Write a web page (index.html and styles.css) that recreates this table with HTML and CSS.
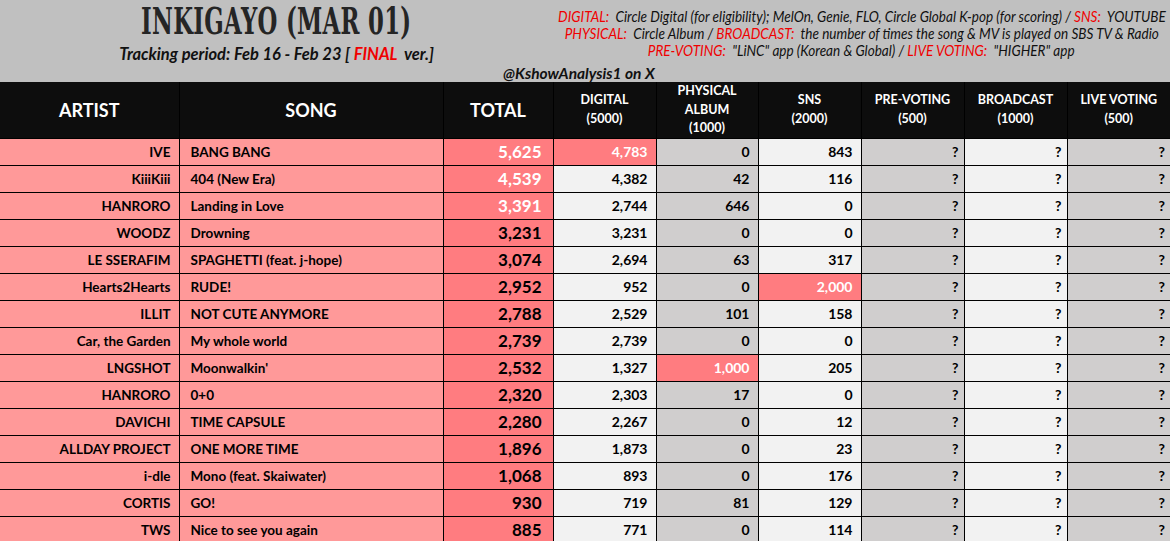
FILE: index.html
```html
<!DOCTYPE html>
<html lang="en">
<head>
<meta charset="utf-8">
<title>INKIGAYO (MAR 01)</title>
<link rel="stylesheet" href="styles.css">
</head>
<body>
<div class="top">
  <div class="title-block">
    <div class="title"><span class="title-text">INKIGAYO (MAR 01)</span></div>
    <div class="period">Tracking period: Feb 16 - Feb 23 [ <span class="red">FINAL</span> &nbsp;ver.]</div>
  </div>
  <div class="info">
    <div class="line"><span class="sq"><span class="red">DIGITAL:</span>&nbsp; Circle Digital (for eligibility); MelOn, Genie, FLO, Circle Global K-pop (for scoring) / <span class="red">SNS:</span>&nbsp; YOUTUBE</span></div>
    <div class="line"><span class="sq"><span class="red">PHYSICAL:</span>&nbsp; Circle Album / <span class="red">BROADCAST:</span>&nbsp; the number of times the song &amp; MV is played on SBS TV &amp; Radio</span></div>
    <div class="line"><span class="sq"><span class="red">PRE-VOTING:</span>&nbsp; "LiNC" app (Korean &amp; Global) / <span class="red">LIVE VOTING:</span>&nbsp; "HIGHER" app</span></div>
  </div>
  <div class="handle">@KshowAnalysis1 on X</div>
</div>
<table class="chart">
  <colgroup>
    <col class="c-artist"><col class="c-song"><col class="c-total"><col class="c-num"><col class="c-num2"><col class="c-num"><col class="c-num"><col class="c-num"><col class="c-num">
  </colgroup>
  <thead>
    <tr>
      <th class="big">ARTIST</th>
      <th class="big">SONG</th>
      <th class="big">TOTAL</th>
      <th>DIGITAL<br>(5000)</th>
      <th>PHYSICAL<br>ALBUM<br>(1000)</th>
      <th>SNS<br>(2000)</th>
      <th>PRE-VOTING<br>(500)</th>
      <th>BROADCAST<br>(1000)</th>
      <th>LIVE VOTING<br>(500)</th>
    </tr>
  </thead>
  <tbody>
    <tr><td class="artist">IVE</td><td class="song">BANG BANG</td><td class="total top3">5,625</td><td class="num light hot">4,783</td><td class="num gray">0</td><td class="num light">843</td><td class="q gray">?</td><td class="q light">?</td><td class="q gray">?</td></tr>
    <tr><td class="artist">KiiiKiii</td><td class="song">404 (New Era)</td><td class="total top3">4,539</td><td class="num light">4,382</td><td class="num gray">42</td><td class="num light">116</td><td class="q gray">?</td><td class="q light">?</td><td class="q gray">?</td></tr>
    <tr><td class="artist">HANRORO</td><td class="song">Landing in Love</td><td class="total top3">3,391</td><td class="num light">2,744</td><td class="num gray">646</td><td class="num light">0</td><td class="q gray">?</td><td class="q light">?</td><td class="q gray">?</td></tr>
    <tr><td class="artist">WOODZ</td><td class="song">Drowning</td><td class="total">3,231</td><td class="num light">3,231</td><td class="num gray">0</td><td class="num light">0</td><td class="q gray">?</td><td class="q light">?</td><td class="q gray">?</td></tr>
    <tr><td class="artist">LE SSERAFIM</td><td class="song">SPAGHETTI (feat. j-hope)</td><td class="total">3,074</td><td class="num light">2,694</td><td class="num gray">63</td><td class="num light">317</td><td class="q gray">?</td><td class="q light">?</td><td class="q gray">?</td></tr>
    <tr><td class="artist">Hearts2Hearts</td><td class="song">RUDE!</td><td class="total">2,952</td><td class="num light">952</td><td class="num gray">0</td><td class="num light hot">2,000</td><td class="q gray">?</td><td class="q light">?</td><td class="q gray">?</td></tr>
    <tr><td class="artist">ILLIT</td><td class="song">NOT CUTE ANYMORE</td><td class="total">2,788</td><td class="num light">2,529</td><td class="num gray">101</td><td class="num light">158</td><td class="q gray">?</td><td class="q light">?</td><td class="q gray">?</td></tr>
    <tr><td class="artist">Car, the Garden</td><td class="song">My whole world</td><td class="total">2,739</td><td class="num light">2,739</td><td class="num gray">0</td><td class="num light">0</td><td class="q gray">?</td><td class="q light">?</td><td class="q gray">?</td></tr>
    <tr><td class="artist">LNGSHOT</td><td class="song">Moonwalkin'</td><td class="total">2,532</td><td class="num light">1,327</td><td class="num gray hot">1,000</td><td class="num light">205</td><td class="q gray">?</td><td class="q light">?</td><td class="q gray">?</td></tr>
    <tr><td class="artist">HANRORO</td><td class="song">0+0</td><td class="total">2,320</td><td class="num light">2,303</td><td class="num gray">17</td><td class="num light">0</td><td class="q gray">?</td><td class="q light">?</td><td class="q gray">?</td></tr>
    <tr><td class="artist">DAVICHI</td><td class="song">TIME CAPSULE</td><td class="total">2,280</td><td class="num light">2,267</td><td class="num gray">0</td><td class="num light">12</td><td class="q gray">?</td><td class="q light">?</td><td class="q gray">?</td></tr>
    <tr><td class="artist">ALLDAY PROJECT</td><td class="song">ONE MORE TIME</td><td class="total">1,896</td><td class="num light">1,873</td><td class="num gray">0</td><td class="num light">23</td><td class="q gray">?</td><td class="q light">?</td><td class="q gray">?</td></tr>
    <tr><td class="artist">i-dle</td><td class="song">Mono (feat. Skaiwater)</td><td class="total">1,068</td><td class="num light">893</td><td class="num gray">0</td><td class="num light">176</td><td class="q gray">?</td><td class="q light">?</td><td class="q gray">?</td></tr>
    <tr><td class="artist">CORTIS</td><td class="song">GO!</td><td class="total">930</td><td class="num light">719</td><td class="num gray">81</td><td class="num light">129</td><td class="q gray">?</td><td class="q light">?</td><td class="q gray">?</td></tr>
    <tr><td class="artist">TWS</td><td class="song">Nice to see you again</td><td class="total">885</td><td class="num light">771</td><td class="num gray">0</td><td class="num light">114</td><td class="q gray">?</td><td class="q light">?</td><td class="q gray">?</td></tr>
  </tbody>
</table>
</body>
</html>
```

FILE: styles.css
```css
html, body {
  margin: 0;
  padding: 0;
  background: #c0c0c0;
  width: 1170px;
  overflow: hidden;
}

body {
  font-family: Lato, "Open Sans", sans-serif;
  color: #000;
}

.top {
  display: grid;
  grid-template-columns: 502px 51px 1fr;
  grid-template-rows: 64px 18px;
  background: #c0c0c0;
}

.title-block {
  grid-column: 1 / 3;
  grid-row: 1;
  text-align: center;
}

.title {
  height: 42px;
  line-height: 42px;
  overflow: visible;
}

.title-text {
  display: inline-block;
  font-family: "DejaVu Serif", "Liberation Serif", serif;
  font-weight: bold;
  font-size: 38px;
  color: #252525;
  transform: scaleX(0.6);
  transform-origin: center;
  white-space: nowrap;
  letter-spacing: 0.5px;
}

.period {
  margin-top: 4px;
  font-size: 16.5px;
  line-height: 17px;
  font-weight: bold;
  font-style: italic;
  color: #111;
}

.red {
  color: #f00000;
}

.info {
  grid-column: 3;
  grid-row: 1;
  padding-top: 8px;
  min-width: 0;
}

.line {
  height: 17px;
  line-height: 17px;
  display: flex;
  justify-content: center;
  white-space: nowrap;
  font-size: 14.5px;
  font-style: italic;
  color: #111;
}

.sq {
  display: inline-block;
  flex: none;
  transform: scaleX(0.935);
  transform-origin: center;
}

.handle {
  grid-column: 2 / 4;
  grid-row: 2;
  font-size: 15.5px;
  line-height: 18px;
  font-weight: bold;
  font-style: italic;
  color: #111;
  padding-left: 1px;
}

.chart {
  border-collapse: collapse;
  table-layout: fixed;
  width: 1170px;
}

.c-artist { width: 179px; }
.c-song { width: 264px; }
.c-total { width: 110px; }
.c-num { width: 103px; }
.c-num2 { width: 102px; }

.chart th {
  background: #0d0d0d;
  color: #fff;
  font-weight: bold;
  font-size: 12.5px;
  line-height: 18.5px;
  height: 54px;
  padding: 0;
  border-left: 1px solid #000;
  border-right: 1px solid #000;
  border-bottom: 1px solid #000;
  text-align: center;
  vertical-align: middle;
}

.chart th:first-child { border-left: none; }
.chart th:last-child { border-right: none; }

.chart th.big {
  font-size: 18px;
}

.chart td {
  height: 26px;
  padding: 0;
  border: 1px solid #000;
  font-weight: bold;
  font-size: 13.5px;
  line-height: 26px;
  white-space: nowrap;
  overflow: hidden;
}

.chart td:first-child { border-left: none; }
.chart td:last-child { border-right: none; }

.artist {
  background: #ff9999;
  text-align: right;
  padding-right: 8px !important;
}

.song {
  background: #ff9999;
  text-align: left;
  padding-left: 11px !important;
}

.total {
  background: #ff7c80;
  text-align: right;
  font-size: 17px !important;
  padding-right: 11px !important;
}

.total.top3 {
  color: #fff;
}

.num {
  text-align: right;
  padding-right: 8px !important;
  font-size: 14px !important;
}

.q {
  text-align: right;
  padding-right: 5px !important;
  font-size: 14px !important;
}

.light { background: #f2f2f2; }
.gray { background: #d0cece; }

.hot {
  background: #ff7c80;
  color: #fff;
}
```
